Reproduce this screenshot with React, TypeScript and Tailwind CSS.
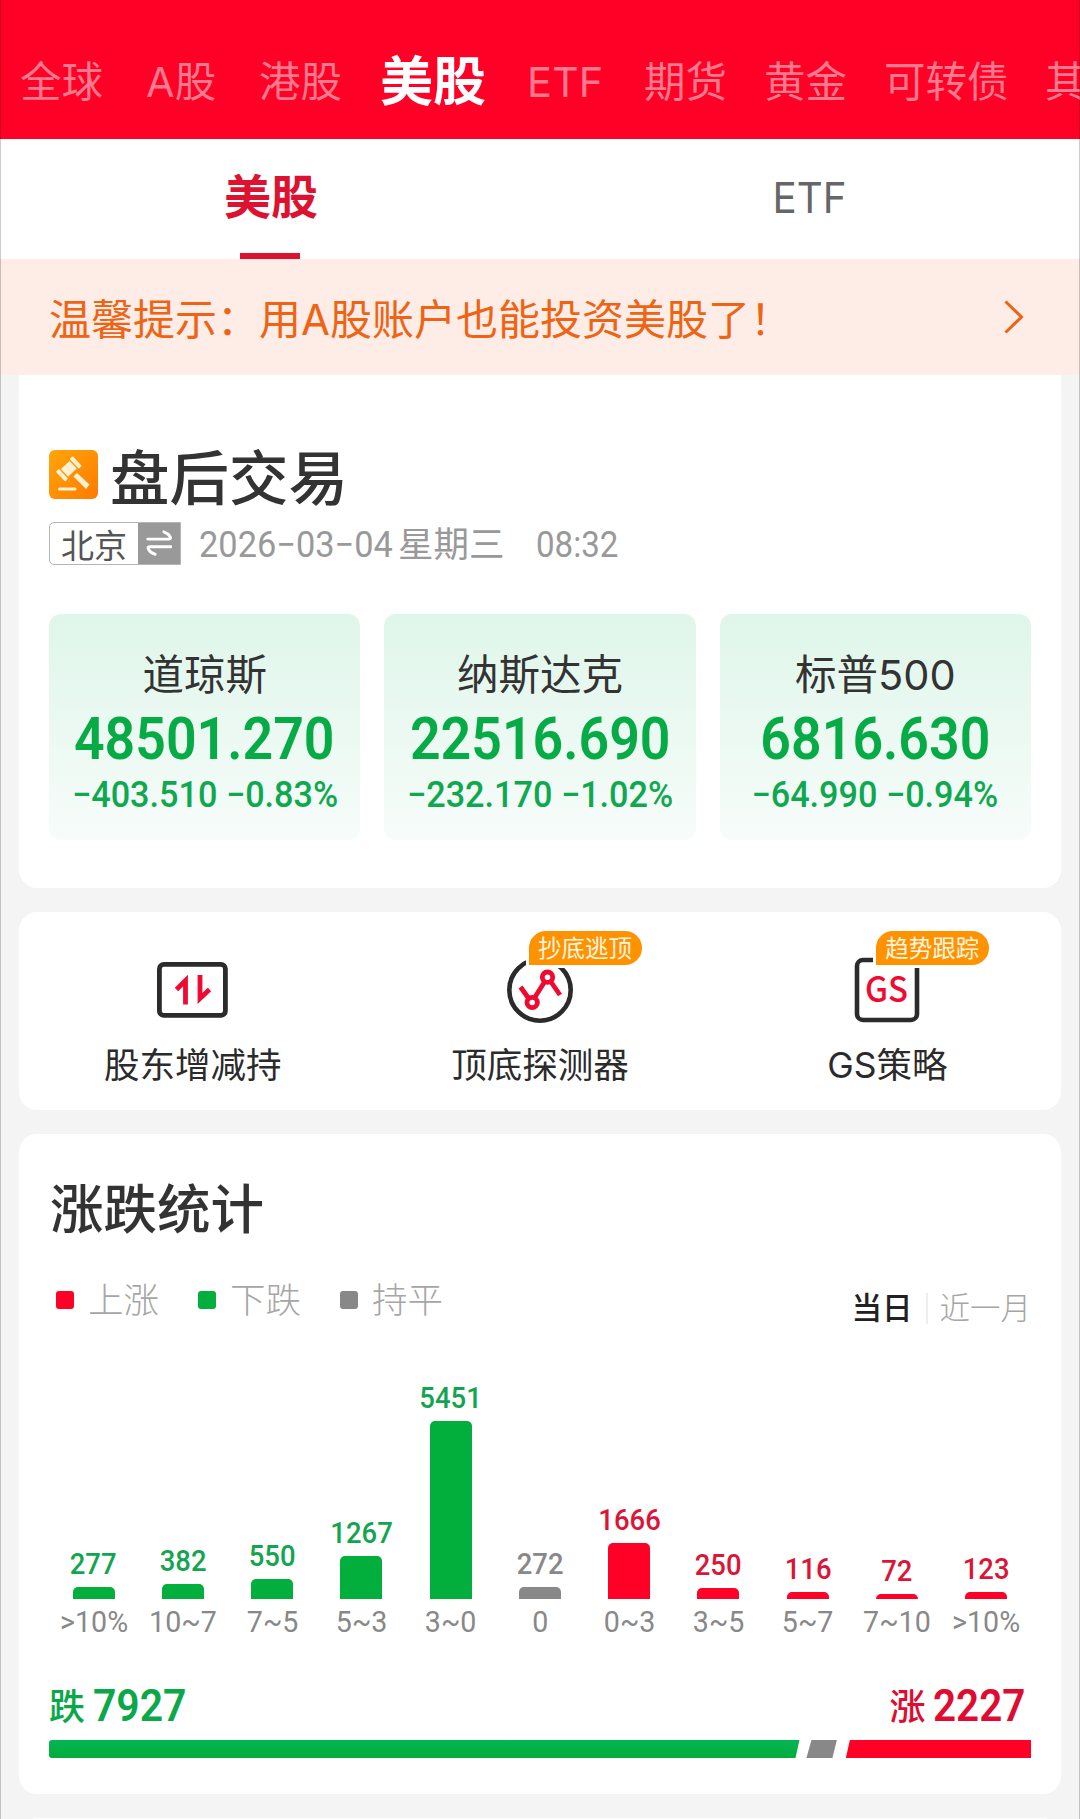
const markets = [
  { name: '全球', className: 'w-[126px]' },
  { name: 'A股', className: 'w-[113px]' },
  { name: '港股', className: 'w-[121px]' },
  { name: '美股', className: 'w-[147px]', active: true },
  { name: 'ETF', className: 'w-[117px]' },
  { name: '期货', className: 'w-[120px]' },
  { name: '黄金', className: 'w-[120px]' },
  { name: '可转债', className: 'w-[161px]' },
  { name: '其他', className: 'w-[84px]' },
];

const indices = [
  { name: '道琼斯', price: '48501.270', change: '−403.510', percent: '−0.83%' },
  { name: '纳斯达克', price: '22516.690', change: '−232.170', percent: '−1.02%' },
  { name: '标普500', price: '6816.630', change: '−64.990', percent: '−0.94%' },
];

const legend = [
  { label: '上涨', color: 'bg-[#ff0026]' },
  { label: '下跌', color: 'bg-[#02ae3c]' },
  { label: '持平', color: 'bg-[#888888]' },
];

const down = { text: 'text-[#12a550]', bar: 'bg-[#02ae3c]' };
const flat = { text: 'text-[#888888]', bar: 'bg-[#888888]' };
const up = { text: 'text-[#dc1438]', bar: 'bg-[#ff0026]' };

const bars = [
  { range: '>10%', count: 277, height: 12, tone: down },
  { range: '10~7', count: 382, height: 15, tone: down },
  { range: '7~5', count: 550, height: 20, tone: down },
  { range: '5~3', count: 1267, height: 43, tone: down },
  { range: '3~0', count: 5451, height: 178, tone: down },
  { range: '0', count: 272, height: 12, tone: flat },
  { range: '0~3', count: 1666, height: 56, tone: up },
  { range: '3~5', count: 250, height: 11, tone: up },
  { range: '5~7', count: 116, height: 7, tone: up },
  { range: '7~10', count: 72, height: 5, tone: up },
  { range: '>10%', count: 123, height: 7, tone: up },
];

const GavelIcon = () => (
  <svg viewBox="0 0 49 49" className="h-[49px] w-[49px]">
    <defs>
      <linearGradient id="gavel" x1="0" y1="0" x2="1" y2="1">
        <stop offset="0" stopColor="#ffa60a" />
        <stop offset="1" stopColor="#ff7a00" />
      </linearGradient>
    </defs>
    <rect width="49" height="49" rx="6" fill="url(#gavel)" />
    <g fill="#fff0d0">
      <g transform="rotate(-43 20 19)">
        <rect x="14" y="13.5" width="12" height="10.5" />
        <rect x="8.5" y="12" width="4.2" height="13.5" rx="1" />
        <rect x="27.3" y="12" width="4.2" height="13.5" rx="1" />
      </g>
      <path d="M28 23 L40.5 34.5 L37 39 L24.5 26.5 Z" />
      <rect x="9" y="37.5" width="18.5" height="3" rx="1.5" />
    </g>
  </svg>
);

const SwapIcon = () => (
  <svg
    viewBox="0 0 42 42"
    className="h-[41px] w-[42px]"
    fill="none"
    stroke="#fff"
    strokeWidth="3"
    strokeLinecap="round"
    strokeLinejoin="round"
  >
    <path d="M9.5 16.5 H31 Q34 16.5 32 13.5 Q30 10.5 26 9" />
    <path d="M33 24.3 H11.5 Q8.5 24.3 10.5 27.5 Q12.5 31 17 32" />
  </svg>
);

const HoldingIcon = () => (
  <svg viewBox="0 0 72 72" className="h-[72px] w-[72px]" fill="none">
    <rect x="2.4" y="10.4" width="66" height="51" rx="4.5" stroke="#2b2b2b" strokeWidth="4.8" />
    <path d="M19.5 35.5 L28.5 26.5 V50.5" stroke="#f00a32" strokeWidth="4.8" />
    <path d="M43 21 V44.5 L52.5 35.5" stroke="#f00a32" strokeWidth="4.8" />
  </svg>
);

const DetectorIcon = () => (
  <svg viewBox="0 0 72 72" className="h-[72px] w-[72px]" fill="none">
    <circle cx="36" cy="36" r="30.7" stroke="#2b2b2b" strokeWidth="4.6" />
    <g stroke="#f00a32" strokeWidth="4.8">
      <path d="M16.5 33 L24 43.5 M31 43 L40.5 28 M47 28 L56 41" />
      <circle cx="28.2" cy="48.5" r="5.2" />
      <circle cx="43.5" cy="23.2" r="5.2" />
    </g>
  </svg>
);

const StrategyIcon = () => (
  <svg viewBox="0 0 72 72" className="h-[72px] w-[72px]" fill="none">
    <rect x="6" y="6" width="60" height="60" rx="6" stroke="#2b2b2b" strokeWidth="4.6" />
    <text
      x="14"
      y="47.5"
      fill="#f00a32"
      fontFamily="Noto Sans CJK SC, sans-serif"
      fontWeight="500"
      fontSize="35"
      textLength="43"
      lengthAdjust="spacingAndGlyphs"
    >
      GS
    </text>
  </svg>
);

const tools = [
  { name: '股东增减持', icon: HoldingIcon },
  { name: '顶底探测器', icon: DetectorIcon, tag: '抄底逃顶' },
  { name: 'GS策略', icon: StrategyIcon, tag: '趋势跟踪' },
];

const MarketNav = () => (
  <nav className="flex h-[139px] items-end overflow-hidden bg-[#ff0026] pb-[27px] pl-[20px]">
    {markets.map((market) => (
      <div key={market.name} className={`flex h-[60px] shrink-0 items-center ${market.className}`}>
        {market.active ? (
          <span className="pt-[2px] text-[53px] font-bold text-white">{market.name}</span>
        ) : (
          <span className="whitespace-nowrap text-[41.5px] text-[#ff7a8c]">{market.name}</span>
        )}
      </div>
    ))}
  </nav>
);

const SubTabs = () => (
  <div className="flex h-[120px] bg-white">
    <div className="flex flex-1 flex-col items-center justify-between pt-[28px]">
      <span className="pl-[2px] text-[47px] font-bold leading-[60px] text-[#dc1230]">美股</span>
      <div className="h-[6px] w-[60px] bg-[#dc1230]" />
    </div>
    <div className="flex flex-1 justify-center pt-[29px]">
      <span className="scale-x-[.96] text-[42px] leading-[60px] text-[#666666]">ETF</span>
    </div>
  </div>
);

const Notice = () => (
  <div className="flex h-[116px] items-center justify-between bg-[#feede6] pl-[49px] pr-[56px]">
    <span className="pt-[5px] text-[42px] leading-[60px] text-[#ee6314]">温馨提示：用A股账户也能投资美股了！</span>
    <svg viewBox="0 0 20 34" className="h-[34px] w-[20px]" fill="none" stroke="#ee6314" strokeWidth="3">
      <path d="M1.5 1.5 L17.5 17 L1.5 32.5" />
    </svg>
  </div>
);

const IndexCard = ({ name, price, change, percent }: (typeof indices)[number]) => (
  <div className="flex h-[226px] flex-1 flex-col items-center rounded-xl bg-linear-to-b from-[#dff6ea] to-[#f7fcfa] pt-[36px]">
    <span className="text-[41.5px] leading-[50px] text-[#333333]">{name}</span>
    <span className="mt-[9px] scale-x-[.91] font-[Roboto] text-[59px] font-semibold leading-[60px] text-[#06ab46]">
      {price}
    </span>
    <span className="mt-[6px] scale-x-[.95] whitespace-nowrap font-[Roboto] text-[36px] font-medium leading-[40px] text-[#0fa850]">
      {change} {percent}
    </span>
  </div>
);

const Overview = () => (
  <section className="mx-[19px] h-[513px] rounded-b-[18px] bg-white px-[30px] pt-[69px]">
    <div className="flex h-[66px] items-start">
      <div className="pt-[6px]">
        <GavelIcon />
      </div>
      <h2 className="ml-[12px] pt-px text-[59.5px] font-medium leading-[66px] text-[#333333]">盘后交易</h2>
    </div>
    <div className="mt-[12px] flex h-[43px] items-center text-[#999999]">
      <div className="flex h-[43px] w-[132px] shrink-0 rounded-l-[5px] border border-[#b5b5b5]">
        <span className="flex-1 pt-[3px] text-center text-[33px] leading-[40px] text-[#555555]">北京</span>
        <div className="w-[42px] bg-[#999999]">
          <SwapIcon />
        </div>
      </div>
      <span className="ml-[18px] w-[199px] origin-left scale-x-[.955] whitespace-nowrap pt-[2px] font-[Roboto] text-[36px]">
        2026−03−04
      </span>
      <span className="pt-[3px] text-[35.5px]">星期三</span>
      <span className="ml-[31px] origin-left scale-x-[.92] pt-[3px] font-[Roboto] text-[36px]">08:32</span>
    </div>
    <div className="mt-[49px] flex gap-6">
      {indices.map((item) => (
        <IndexCard key={item.name} {...item} />
      ))}
    </div>
  </section>
);

const Tools = () => (
  <section className="mx-[19px] mt-6 flex h-[198px] rounded-[18px] bg-white">
    {tools.map((tool) => (
      <div key={tool.name} className="flex flex-1 flex-col items-center pt-[42px]">
        <div className="relative">
          <tool.icon />
          {tool.tag && (
            <span className="absolute -top-[26px] left-[22px] whitespace-nowrap rounded-[20px] rounded-bl-none border-[3px] border-white bg-[#ff9200] pl-[9px] pr-[10px] pt-[2px] text-[23.5px] leading-[32px] text-[#fff6e0]">
              {tool.tag}
            </span>
          )}
        </div>
        <span className="mt-[14px] text-[35.5px] leading-[52px] text-[#2b2b2b]">{tool.name}</span>
      </div>
    ))}
  </section>
);

const Statistics = () => (
  <section className="mx-[19px] mt-6 h-[660px] rounded-[18px] bg-white px-[30px] pt-[44px]">
    <h2 className="pl-px text-[53.5px] font-medium leading-[64px] text-[#333333]">涨跌统计</h2>
    <div className="mt-[32px] flex h-[52px] justify-between">
      <div className="flex gap-[39px] pl-[7px]">
        {legend.map((item) => (
          <div key={item.label} className="flex h-[52px] items-center gap-[14px]">
            <i className={`h-[18px] w-[18px] rounded-[3px] ${item.color}`} />
            <span className="pt-px text-[35.5px] font-light leading-[52px] text-[#a6a6a6]">{item.label}</span>
          </div>
        ))}
      </div>
      <div className="flex items-center pt-[16px] text-[30.5px]">
        <span className="font-medium text-[#222222]">当日</span>
        <i className="ml-[13px] mr-[12px] h-[31px] w-[2px] bg-[#eeeeee]" />
        <span className="font-light text-[#a6a6a6]">近一月</span>
      </div>
    </div>

    <div className="flex h-[273px] items-end">
      {bars.map((bar, i) => (
        <div key={i} className="flex flex-1 flex-col items-center">
          <span className={`scale-x-[.93] font-[Roboto] text-[29.5px] font-medium leading-[33px] ${bar.tone.text}`}>
            {bar.count}
          </span>
          <div className={`mt-[6px] w-[42px] rounded-t-[5px] ${bar.tone.bar}`} style={{ height: bar.height }} />
        </div>
      ))}
    </div>
    <div className="mt-[6px] flex">
      {bars.map((bar, i) => (
        <div key={i} className="flex flex-1 justify-center">
          <span className="scale-x-[.97] font-[Roboto] text-[29.5px] leading-[34px] text-[#888888]">{bar.range}</span>
        </div>
      ))}
    </div>

    <div className="mt-[42px] flex h-[50px] items-center justify-between">
      <div className="flex items-center text-[#0ba84a]">
        <span className="pt-[2px] text-[36px] font-medium">跌</span>
        <span className="ml-[8px] origin-left scale-x-[.94] pt-[2px] font-[Roboto] text-[43.5px] font-semibold">7927</span>
      </div>
      <div className="flex items-center pr-[6px] text-[#e00b30]">
        <span className="pt-[2px] text-[36px] font-medium">涨</span>
        <span className="origin-right scale-x-[.93] pt-[2px] font-[Roboto] text-[43.5px] font-semibold">2227</span>
      </div>
    </div>
    <svg viewBox="0 0 984 18" preserveAspectRatio="none" className="mt-[9px] h-[18px] w-full">
      <defs>
        <linearGradient id="fall" x1="0" y1="0" x2="0" y2="1">
          <stop offset="0" stopColor="#04b552" />
          <stop offset="1" stopColor="#02ad3a" />
        </linearGradient>
      </defs>
      <path d="M3 0 H752 L748 18 H3 Q0 18 0 15 V3 Q0 0 3 0 Z" fill="url(#fall)" />
      <path d="M764 0 H789.5 L785 18 H759 Z" fill="#888888" />
      <path d="M802.5 0 H984 V18 H798.5 Z" fill="#ff0026" />
    </svg>
  </section>
);

export default function App() {
  return (
    <div className="relative h-[1819px] w-[1080px] overflow-hidden bg-[#f4f4f4] font-[Inter,'Noto_Sans_CJK_SC',sans-serif]">
      <MarketNav />
      <SubTabs />
      <Notice />
      <Overview />
      <Tools />
      <Statistics />
      <section className="mx-[19px] mt-[24px] h-[40px] rounded-[18px] bg-white" />
      <div className="pointer-events-none absolute inset-0 border-x border-black/20" />
    </div>
  );
}
